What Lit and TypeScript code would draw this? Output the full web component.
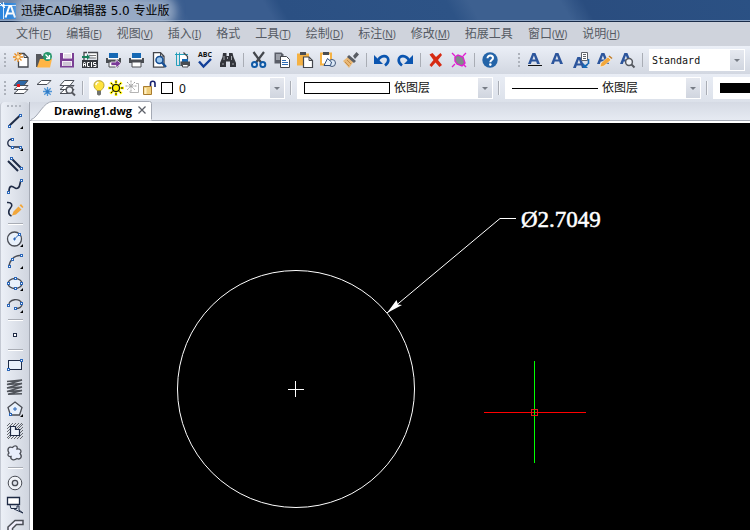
import { LitElement, html, svg, css, nothing, SVGTemplateResult } from "lit";
import { customElement, property } from "lit/decorators.js";

const INK = "#1f2b45";
const GRAY = "#4a4d55";
const BLUE = "#0b55b0";
const ORANGE = "#f2a73b";

/** Small square grip that marks an end point of a drawing primitive. */
const node = (x: number, y: number) =>
  svg`<rect x=${x + 0.5} y=${y + 0.5} width="2" height="2" fill="#fff" stroke="#2a66b8" shape-rendering="crispEdges"/>`;
const corner = svg`<path d="M16 13v3h-3z" fill="#000"/>`;
const printer = svg`<path d="M4 1h9v6H4z" fill="#1668b4"/><path d="M1 6h15v5H1z" fill="#4a4d52"/><path d="M3 6h11v1.5H3z" fill="#fff"/><path d="M4 10h9v5H4z" fill="#fff" stroke="#4a4d52"/>`;
const letterA = svg`<path d="M1 12 5.4 1h3L13 12h-3L9.200 9.600H4.700L3.900 12zM5.400 7.500h3L6.900 3.500z" fill="#2c559c"/>`;
const layers = (top: string) =>
  svg`<g stroke="#4a4e56" fill="#fff"><path d="M5.500 9.500H15L11 13.500H1z"/><path d="M5.500 5.500H15L11 9.500H1z"/><path d="M5.500.500H15L11 5.500H1z" fill=${top}/></g>`;

const ICONS: Record<string, SVGTemplateResult> = {
  new: svg`<path d="M6 1.500h5l4 4v9.500H5.500V9" fill="#fff" stroke="#44474d" stroke-width="1.300"/><path d="M11 1.500v4h4" fill="none" stroke="#44474d"/><path d="M5 0v10M0 5h10M1.500 1.500l7 7M8.500 1.500l-7 7" stroke="#e98b1c" stroke-width="1.300"/><circle cx="5" cy="5" r="1.800" fill="#ffe9b8"/>`,
  open: svg`<path d="M0 2h5l1 2h5v11H0z" fill="#55575c"/><path d="M4 7h12l-2 8.500H1z" fill="#ffb545"/><circle cx="11.500" cy="4.500" r="4.500" fill="#26966a"/><path d="M9.500 2.500l4 4M13.500 3v3.500H10" stroke="#fff" stroke-width="1.300" fill="none"/>`,
  save: svg`<path d="M1 1h14v14.500H1z" fill="#7b4095"/><path d="M4 1h9v5.500H4z" fill="#fff"/><path d="M3 9h10v5H3z" fill="#f2ecf6"/><path d="M4 11h8M4 13h8" stroke="#aaa0b4"/><path d="M5 3h7M5 5h7" stroke="#c9c1d0"/>`,
  acis: svg`<path d="M6 .500h9.500v8M2 8.500V.500h3" fill="#fff" stroke="#44474d" stroke-width="1.300"/><path d="M7 3.500h7M7 6h7" stroke="#777"/><path d="M0 4h5V2l3 3-3 3V6H0z" fill="#17805a"/><path d="M0 8h16v8H0z" fill="#34373c"/><path d="M1.500 14.500v-3l1-1.500 1 1.500v3M1.500 12.500h2M7.500 10.500h-2v4h2M9.500 10v5M14 10.500h-2.500v2H14v2h-2.500" stroke="#fff" fill="none"/>`,
  printTo: svg`${printer}<path d="M6 10h5V7.500l5 4-5 4.500v-2.500H6z" fill="#7a3b98" stroke="#fff" stroke-width=".700"/>`,
  print: printer,
  preview: svg`<path d="M2.500.700h7l3.500 3.500v11H2.500z" fill="#fff" stroke="#44474d" stroke-width="1.300"/><path d="M9.500.700v3.500H13" fill="none" stroke="#44474d"/><circle cx="8.500" cy="8" r="3.500" fill="#9ec8ee" stroke="#174f94" stroke-width="1.600"/><path d="M11 10.500l4 4.500" stroke="#174f94" stroke-width="2.300"/>`,
  plot: svg`<path d="M5 2h6l3 3v4H5z" fill="#fff"/><path d="M2.500.500v13h4M1 2.500h13M5.500.500v13" fill="none" stroke="#25a0bb"/><path d="M9.500.500l4 4v3" fill="none" stroke="#44474d" stroke-width="1.200"/><path d="M8 7h6v3H8z" fill="#1668b4"/><path d="M6.500 9.500H16V14H6.500z" fill="#4a4d52"/><path d="M8.500 12.500H14V15H8.500z" fill="#fff" stroke="#4a4d52"/>`,
  spell: svg`<path d="M2 9.500l4.500 5L14 7" fill="none" stroke="#123f98" stroke-width="2.400"/>`,
  find: svg`<path d="M3 1h3.500v3H9V1h3.500l1 4 2.500 6v4h-6V9.500H6V15H0v-4l2.500-6z" fill="#33353b"/><path d="M4 4v4M11.500 4v4M2 12h2M12 12h2M7.500 5v2" stroke="#a3a6ad"/>`,
  cut: svg`<path d="M2.500 0L10 10.500M13 0L5 10.500" stroke="#44474d" stroke-width="2.200"/><circle cx="3.500" cy="12.500" r="2.500" fill="#dce8f6" stroke="#105aa6" stroke-width="2"/><circle cx="11.800" cy="12.500" r="2.500" fill="#dce8f6" stroke="#105aa6" stroke-width="2"/>`,
  copy: svg`<path d="M.500.500h7l2 2v9H.500z" fill="#5a5e68"/><path d="M2 3h5M2 5h4M2 7h4" stroke="#dfe3ea"/><path d="M6.500 4.500h6l3 3v8h-9z" fill="#fff" stroke="#44474d"/><path d="M8 8.500h4M8 10.500h6M8 12.500h6" stroke="#2e6cb5"/>`,
  paste: svg`<path d="M0 1.500h12v12H0z" fill="#f5b244"/><path d="M3 0h6v3H3z" fill="#4a4d52"/><path d="M6.500 5h5.500l3.500 3.500v7h-9z" fill="#fff" stroke="#44474d" stroke-width="1.200"/><path d="M12 5v3.500h3.500" fill="none" stroke="#44474d"/>`,
  pasteBlock: svg`<path d="M1 1.500h10v11H1z" fill="#fff" stroke="#f5b244" stroke-width="2"/><path d="M3 0h6v3H3z" fill="#4a4d52"/><circle cx="12" cy="11" r="3.500" fill="#dce9f7" stroke="#44597b"/><path d="M4 13.500l3.500-7 4 3.500-1 3.500z" fill="#e9f1fa" stroke="#2e4d7c"/>`,
  brush: svg`<path d="M0 9l6-5 5 5-5 7z" fill="#e8b877"/><path d="M2 10l4 4M4 8l4 4" stroke="#c68c48"/><path d="M6 3l7 6-2 2-7-6zM10 4l3.500-4L16 2.500 12 7z" fill="#595d64"/>`,
  undo: svg`<path d="M0 3v9h9z" fill="${BLUE}"/><path d="M4 8.500C6.500 3 14 2.500 14.300 8c.100 2.500-1.300 4-3.300 5.500" fill="none" stroke="${BLUE}" stroke-width="2.700"/>`,
  redo: svg`<path d="M16 3v9H7z" fill="${BLUE}"/><path d="M12 8.500C9.500 3 2 2.500 1.700 8c-.100 2.500 1.300 4 3.300 5.500" fill="none" stroke="${BLUE}" stroke-width="2.700"/>`,
  remove: svg`<path d="M1.500 2.500l3-1.500L8 5l4.500-4L14 3l-4 5 4 5-2.500 2L7.500 10.500 3.500 15 1.500 13 5.500 8z" fill="#d62a12"/>`,
  purge: svg`<path d="M4 5l3-2 5 2 2 6-3 3-5-2-2-3z" fill="#7f8b8b" stroke="#e01fd0" stroke-width="1.400"/><path d="M1 1l3 3M15 1l-3 3M1 15l3-3M15 15l-3-3" stroke="#e01fd0" stroke-width="1.400"/>`,
  help: svg`<circle cx="8" cy="8" r="7.700" fill="#2464a8"/><path d="M5.500 6.200C5.500 2.500 11 2.800 11 6c0 2-2.700 2-2.700 4.200" fill="none" stroke="#fff" stroke-width="2"/><circle cx="8.300" cy="12.600" r="1.300" fill="#fff"/>`,
  textLine: svg`${letterA}<path d="M1 13.500h14" stroke="#111"/>`,
  text: letterA,
  textAll: svg`<g transform="translate(-1 4)">${letterA}</g><path d="M8.500.500h6v8h-6z" fill="#fff" stroke="#60646c"/><path d="M10 2.500h3M10 4.500h3M10 6.500h3" stroke="#60646c"/><path d="M15.500 7v5M15 12l-4 3" stroke="#1668b4" stroke-width="1.600"/><path d="M10 11v5h5z" fill="#1668b4"/>`,
  textEdit: svg`${letterA}<path d="M4 15l1-4 7-6 3 3-7 6z" fill="${ORANGE}" stroke="#fff" stroke-width=".500"/><path d="M13 4l3 2.500" stroke="#c27b22" stroke-width="1.500"/>`,
  textFind: svg`${letterA}<circle cx="10" cy="10" r="3.400" fill="#eef1f6" stroke="#55585f" stroke-width="1.500"/><path d="M12.500 12.500L15.500 15.500" stroke="#55585f" stroke-width="2"/>`,
  layer: svg`${layers("#2d68a6")}<path d="M4 4h3v3H4z" fill="#e5181c"/>`,
  layerFreeze: svg`<path d="M5.500.500H15L11 4.500H1z" fill="#fff" stroke="#4a4e56"/><path d="M11.500 7v9M7 11.500h9M8.300 8.300l6.400 6.400M14.700 8.300l-6.400 6.400" stroke="#4e94d6" stroke-width="1.300"/><circle cx="11.500" cy="11.500" r="1.600" fill="#2f7ac4"/>`,
  layerFind: svg`${layers("#fff")}<circle cx="10.500" cy="10" r="3.300" fill="#eef1f6" stroke="#55585f" stroke-width="1.500"/><path d="M13 12.500l3 3" stroke="#55585f" stroke-width="2"/>`,
  bulb: svg`<path d="M6 10.500C5 9 3 8 3 5.300 3 2.500 5 .700 8 .700s5 1.800 5 4.600c0 2.700-2 3.700-3 5.200z" fill="#ffe33f" stroke="#b8a22d"/><path d="M5.500 2.500l2 0M5 5l.500-2" stroke="#fff" stroke-width="1.400"/><path d="M6 11h4v3.500L8.500 15.500h-1L6 14.500z" fill="#70736f"/>`,
  sun: svg`<path d="M8 0v16M0 8h16M2.300 2.300l11.400 11.400M13.700 2.300L2.300 13.700" stroke="#fff200" stroke-width="2.500"/><path d="M8 1v2M8 13v2M1 8h2M13 8h2M3 3l1.500 1.500M13 3l-1.500 1.500M3 13l1.500-1.500M13 13l-1.500-1.500" stroke="#111"/><circle cx="8" cy="8" r="3.500" fill="#fff200" stroke="#111" stroke-width="1.200"/>`,
  viewFreeze: svg`<path d="M6 .500v11M.500 6h11M2 2l8 8M10 2l-8 8" stroke="#9c9c9c" stroke-dasharray="2 1"/><path d="M11 3.500h2.500v9H5V11" fill="none" stroke="#b4b4b4"/>`,
  unlock: svg`<path d="M8.500 7V3.500C8.500.500 13 .500 13 3.500V7" fill="none" stroke="#16206c" stroke-width="1.600"/><path d="M1.500 6.500h8v8h-8z" fill="#f0cf7e" stroke="#a97c2e"/><path d="M2.500 8h2v6h-2z" fill="#fff0c5"/>`,
  swatch: svg`<path d="M2.500 2.500h11v11h-11z" fill="#fff" stroke="#000" shape-rendering="crispEdges"/>`,
  line: svg`<path d="M2.500 12.500L13 2.500" stroke="${INK}" stroke-width="2"/>${node(1, 12)}${node(12, 1)}${corner}`,
  polyline: svg`<path d="M6 4C-1 4-1 12 6 12h7" fill="none" stroke="${INK}" stroke-width="1.300"/>${node(4, 3)}${node(4, 11)}${node(12, 11)}${corner}`,
  multiline: svg`<path d="M1 4l10 10M4.500 1.500l9.500 9.500" stroke="${INK}" stroke-width="2"/>${node(3, 0)}${node(13, 10)}`,
  spline: svg`<path d="M2 13C2 3 8 9.500 9 9.500c5.500 0 2.500-6 5.500-8" fill="none" stroke="${INK}" stroke-width="1.700"/>${node(0, 12)}${node(13, 0)}`,
  sketch: svg`<path d="M0 1.500c5-.500 6 3 3.500 5.500-2 2-3 6.500 1 8" fill="none" stroke="${INK}" stroke-width="1.600"/><path d="M5 14.500l1.500-4 5-5 3 3-5.500 5zM12.500 4.500l1.500-1.500 2.500 3L15.500 7z" fill="${ORANGE}"/>`,
  circle: svg`<circle cx="7.500" cy="8" r="7" fill="#e9f1fb" stroke="${GRAY}" stroke-width="1.300"/><path d="M7.500 8l4-4M6 8h3M7.500 6.500v3" stroke="#2a66b8"/>${node(11, 2)}${corner}`,
  arc: svg`<path d="M2 14C2 8 7 2.500 13 2.500" fill="none" stroke="${GRAY}" stroke-width="1.400"/>${node(1, 12)}${node(4, 5)}${node(13, 1)}${corner}`,
  ellipse: svg`<ellipse cx="8" cy="8.500" rx="7" ry="5" fill="#e9f1fb" stroke="${GRAY}" stroke-width="1.300"/>${node(7, 2)}${node(0, 7)}${node(13, 7)}${node(7, 12)}${corner}`,
  ellipseArc: svg`<path d="M2 9c-2-7 12-9 13-2 .300 3-3 4.500-6 4.500" fill="none" stroke="${GRAY}" stroke-width="1.300"/>${node(0, 7)}${node(13, 5)}${node(7, 10)}${corner}`,
  point: svg`<path d="M6.500 6.500h3v3h-3z" fill="#fff" stroke="${INK}" shape-rendering="crispEdges"/>`,
  rect: svg`<path d="M1.500 3.500h13v9h-13z" fill="#e9f1fb" stroke="${INK}" shape-rendering="crispEdges"/>${node(0, 11)}${node(13, 2)}`,
  helix: svg`<path d="M0 2.500L15 1 0 5.500 15 4.500 0 9l15-1-15 4.500 15-1L1 15.300l14-.500" fill="none" stroke="#50545b" stroke-width="1.500"/>`,
  polygon: svg`<path d="M8 1l7 5.500L12.500 14h-9L1 6.500z" fill="#e9f1fb" stroke="${GRAY}" stroke-width="1.300"/><path d="M6 8h4M8 6v4" stroke="#2a66b8"/>${node(2, 12)}${corner}`,
  hatch: svg`<path d="M0 3l3-3M0 6l6-6M0 9l9-9M0 12L12 0M0 15L15 0M1 16L16 1M4 16L16 4M7 16l9-9M10 16l6-6M13 16l3-3" stroke="#44474d" stroke-width=".800"/><path d="M3.500 3.500h5v3h4v6h-9z" fill="#edf3fb" stroke="${INK}" stroke-width="1.200"/>`,
  cloud: svg`<path d="M2 8C-.500 4 2 1 5.500 2.500 8-.500 11 1 10 4c4-.500 5 2.500 3 4.500C16 12 13 15 10 13.500 7 16 3 14.500 4 11.500 1 12 0 9.500 2 8z" fill="#e9eefb" stroke="${GRAY}" stroke-width="1.300"/>`,
  donut: svg`<circle cx="8" cy="8" r="6.800" fill="#f0f3f8" stroke="${GRAY}"/><circle cx="8" cy="8" r="2.700" fill="#dce0e8" stroke="${GRAY}" stroke-width="1.300"/>`,
  wipeout: svg`<path d="M.500.500h12v7H.500z" fill="#fff" stroke="${INK}" stroke-width="1.300"/><path d="M3 8l1 3.500h6V9h2v4l4 3-9-4" fill="#e9f1fb" stroke="${INK}"/>`,
  chamfer: svg`<path d="M1 16V8l7-6.500h8v4H9.500l-4 4V16z" fill="#f1effc" stroke="${GRAY}" stroke-width="1.500"/>`,
};

@customElement("cad-icon")
class CadIcon extends LitElement {
  @property() name = "";
  static styles = css`
    :host { display: block; width: 16px; height: 16px; flex: none; }
    .glyph { display: block; overflow: visible; }
    .abc { font: bold 7px "Open Sans", "Noto Sans", sans-serif; fill: #111; }
  `;
  render() {
    return html`<svg class="glyph" width="16" height="16" viewBox="0 0 16 16" aria-hidden="true">
      ${ICONS[this.name] ?? nothing}
      ${this.name === "spell" ? svg`<text class="abc" x="8" y="5" text-anchor="middle">ABC</text>` : nothing}
    </svg>`;
  }
}

/** Row or column of tool buttons; "|" stands for a separator. */
@customElement("tool-strip")
class ToolStrip extends LitElement {
  @property({ type: Array }) tools: [string, string][] = [];
  @property({ type: Boolean, reflect: true }) vertical = false;
  static styles = css`
    :host { display: flex; align-items: center; gap: 7px; flex: none; }
    :host([vertical]) { flex-direction: column; gap: 6px; }
    .tool { display: block; padding: 0; border: 0; background: none; width: 16px; height: 16px; }
    .tool:hover { background: #fff8; }
    .sep { width: 1px; height: 14px; background: #a9adb5; }
    :host([vertical]) .sep { width: 15px; height: 1px; border-bottom: 1px solid #fff; }
  `;
  render() {
    return this.tools.map(([icon, label]) =>
      icon === "|"
        ? html`<span class="sep"></span>`
        : html`<button class="tool" title=${label} aria-label=${label}><cad-icon name=${icon}></cad-icon></button>`
    );
  }
}

@customElement("cad-select")
class CadSelect extends LitElement {
  @property() label = "";
  @property() value = "";
  @property({ reflect: true }) kind = "text";
  static styles = css`
    :host { display: block; position: relative; flex: none; width: 196px; height: 22px; }
    :host([kind="text"]) { width: 96px; }
    .box {
      appearance: none; display: block; width: 100%; height: 22px; margin: 0; border: 0; border-radius: 0;
      background: #fff; color: #111; padding: 0 18px 0 97px;
      font: 12px "Liberation Sans", "Noto Sans CJK SC", sans-serif;
    }
    .box.text { padding-left: 3px; font: 10px "DejaVu Sans Mono", monospace; }
    .box.layer { padding-left: 90px; font-family: "Noto Sans", sans-serif; }
    .preview { position: absolute; left: 7px; top: 0; height: 22px; display: flex; align-items: center; pointer-events: none; }
    .preview.icons { left: 2px; gap: 1px; }
    .sample { box-sizing: border-box; width: 86px; background: #000; }
    .sample.color { height: 12px; border: 1px solid #000; background: #fff; }
    .sample.stroke { height: 1px; }
    .sample.weight { height: 10px; }
    .arrow {
      position: absolute; right: 1px; top: 1px; width: 14px; height: 20px; pointer-events: none;
      display: flex; align-items: center; justify-content: center;
      background: linear-gradient(#e6e9f0, #d0d5df);
    }
    .arrow::before { content: ""; border: 3px solid transparent; border-top-color: #777c85; border-bottom: 0; }
  `;
  renderPreview() {
    if (this.kind === "text") return nothing;
    if (this.kind === "layer") {
      const icons = ["bulb", "sun", "viewFreeze", "unlock", "swatch"];
      return html`<span class="preview icons">${icons.map((n) => html`<cad-icon name=${n}></cad-icon>`)}</span>`;
    }
    return html`<span class="preview"><span class="sample ${this.kind}"></span></span>`;
  }
  render() {
    return html`<select class="box ${this.kind}" aria-label=${this.label}><option>${this.value}</option></select>
      ${this.renderPreview()}
      <span class="arrow"></span>`;
  }
}

const MENUS: [string, string][] = [
  ["文件", "F"], ["编辑", "E"], ["视图", "V"], ["插入", "I"], ["格式", ""], ["工具", "T"],
  ["绘制", "D"], ["标注", "N"], ["修改", "M"], ["拓展工具", ""], ["窗口", "W"], ["说明", "H"],
];
const SEP: [string, string] = ["|", ""];
const MAIN: [string, string][] = [
  ["new", "新建"], ["open", "打开"], ["save", "保存"], ["acis", "输入ACIS"], ["printTo", "发布"], ["print", "打印"],
  ["preview", "打印预览"], ["plot", "页面设置"], ["spell", "拼写检查"], ["find", "查找"], SEP,
  ["cut", "剪切"], ["copy", "复制"], ["paste", "粘贴"], ["pasteBlock", "粘贴为块"], ["brush", "特性匹配"], SEP,
  ["undo", "撤销"], ["redo", "重做"], SEP, ["remove", "删除"], ["purge", "清理"], SEP, ["help", "帮助"],
];
const TEXT: [string, string][] = [
  ["textLine", "单行文字"], ["text", "多行文字"], ["textAll", "文字样式"], ["textEdit", "编辑文字"], ["textFind", "查找文字"], SEP,
];
const LAYER: [string, string][] = [["layer", "图层"], ["layerFreeze", "冻结图层"], ["layerFind", "图层浏览"]];
const DRAW: [string, string][] = [
  ["line", "直线"], ["polyline", "多段线"], ["multiline", "多线"], ["spline", "样条曲线"], ["sketch", "草图"], SEP,
  ["circle", "圆"], ["arc", "圆弧"], ["ellipse", "椭圆"], ["ellipseArc", "椭圆弧"], SEP, ["point", "点"], SEP,
  ["rect", "矩形"], ["helix", "螺旋"], ["polygon", "多边形"], ["hatch", "图案填充"], ["cloud", "修订云线"], SEP,
  ["donut", "圆环"], ["wipeout", "区域覆盖"], ["chamfer", "倒角"],
];

@customElement("app-root")
class AppRoot extends LitElement {
  static styles = css`
    :host {
      display: flex; flex-direction: column; height: 100vh; overflow: hidden;
      background: #dfe4ed; color: #111; font: 12px "Noto Sans", "Noto Sans CJK SC", sans-serif;
    }
    .title {
      flex: none; box-sizing: border-box; height: 22px; display: flex; align-items: center; gap: 5px;
      border-bottom: 1px solid #1a2c49; box-shadow: inset 0 -1px #8ba3c4;
      background: linear-gradient(60deg, #7389a9 0%, #6580a8 18%, #3a5d8f 25%, #3a5d8f 36%, #2b5083 38%, #2d5386 60%, #3d6090 63%, #3d6090 75%, #2a4d7f 78%, #2b5184 100%);
    }
    .logo { flex: none; align-self: flex-end; margin-bottom: 2px; }
    .caption {
      margin: 0; font: 400 12px/18px "DejaVu Sans", "Noto Sans CJK SC", sans-serif; color: #000; white-space: nowrap;
      background: #b9c6d899; box-shadow: 0 0 8px 6px #b9c6d899; border-radius: 8px;
    }
    .menu { flex: none; height: 24px; display: flex; align-items: center; gap: 15px; padding: 0 16px; box-sizing: border-box; background: #cfd3dc; }
    .item { padding: 0; border: 0; background: none; color: #555a63; font: inherit; line-height: 20px; white-space: nowrap; }
    .key { font-size: 10px; }
    .bar {
      flex: none; display: flex; align-items: center; height: 28px; padding-left: 4px; overflow: hidden;
      background: linear-gradient(#ebeff7, #d2d7e1);
    }
    .bar.props { gap: 5px; background: linear-gradient(#e9edf5, #dce1ea); }
    .grip { flex: none; width: 2px; height: 14px; margin-right: 7px; background: repeating-linear-gradient(#adb2bb 0 2px, transparent 2px 4px); }
    .grip.second { margin: 0 7px 0 20px; }
    .bar.props .grip, .bar.props .layers { margin-right: 2px; }
    .style { margin-left: 6px; }
    .rule { flex: none; width: 1px; height: 14px; background: #a9adb5; border-right: 1px solid #f4f6fa; }
    .body { flex: 1; min-height: 0; display: flex; }
    .side {
      flex: none; box-sizing: border-box; width: 29px; padding: 3px 5px 0 6px; overflow: hidden;
      border-left: 1px solid #c4c9d3; border-radius: 4px 4px 0 0; background: linear-gradient(90deg, #ecf0f7, #d0d5df);
    }
    .side .tools { margin-top: 6px; width: 16px; }
    .dots { height: 2px; width: 14px; background: repeating-linear-gradient(90deg, #b2b7c0 0 2px, transparent 2px 4px); }
    .work { flex: 1; min-width: 0; display: flex; flex-direction: column; border-left: 1px solid #a4a9b4; }
    .tabs { flex: none; height: 18px; display: flex; background: linear-gradient(#d5dae4, #e6eaf2); border-bottom: 1px solid #a4a9b4; }
    .tab { position: relative; flex: none; display: flex; align-items: center; width: 122px; height: 18px; box-sizing: border-box; padding: 0 5px 0 24px; }
    .shape { position: absolute; left: 1px; top: -2px; }
    .name { position: relative; padding: 0; border: 0; background: none; color: #000; font: bold 11px/16px "Open Sans", "Noto Sans", sans-serif; }
    .close { position: relative; margin-left: auto; padding: 0; border: 0; background: none; width: 10px; height: 16px; }
    .x { display: block; }
    .frame { flex: 1; min-height: 0; border: solid #fff; border-width: 2px 0 0 3px; background: #000; }
    .drawing { display: block; width: 100%; height: 100%; }
    .dim { font: 23px "Liberation Serif", serif; fill: #fff; stroke: #fff; stroke-width: 0.5px; }
  `;

  render() {
    return html`
      <header class="title">
        <svg class="logo" width="16" height="17" viewBox="0 0 16 17" aria-hidden="true">
          <path d="M0 1h16v16H0z" fill="#2b84dc" />
          <path d="M0 3.500h16M3.500 0v17" stroke="#d5e8fb" />
          <path d="M0 1l5 5" stroke="#fff" />
          <path d="M5.500 15.500L9.500 4h1.500l4 11.500M7 11.500h6.500" fill="none" stroke="#fff" stroke-width="2" />
          <circle cx="3.500" cy="3.500" r="1.500" fill="#fff" />
        </svg>
        <h1 class="caption">迅捷CAD编辑器 5.0 专业版</h1>
      </header>
      <nav class="menu">
        ${MENUS.map(([text, key]) => html`<button class="item">${text}${key ? html`<span class="key">(<u>${key}</u>)</span>` : nothing}</button>`)}
      </nav>
      <div class="bar">
        <span class="grip"></span>
        <tool-strip .tools=${MAIN}></tool-strip>
        <span class="grip second"></span>
        <tool-strip .tools=${TEXT}></tool-strip>
        <cad-select class="style" kind="text" label="文字样式" value="Standard"></cad-select>
      </div>
      <div class="bar props">
        <span class="grip"></span>
        <tool-strip class="layers" .tools=${LAYER}></tool-strip>
        <span class="rule"></span>
        <cad-select kind="layer" label="图层" value="0"></cad-select>
        <span class="rule"></span>
        <cad-select kind="color" label="颜色" value="依图层"></cad-select>
        <span class="rule"></span>
        <cad-select kind="stroke" label="线型" value="依图层"></cad-select>
        <span class="rule"></span>
        <cad-select kind="weight" label="线宽" value="依图层"></cad-select>
      </div>
      <div class="body">
        <aside class="side">
          <div class="dots"></div>
          <tool-strip class="tools" vertical .tools=${DRAW}></tool-strip>
        </aside>
        <main class="work">
          <div class="tabs">
            <div class="tab">
              <svg class="shape" width="122" height="21" viewBox="0 0 122 21" aria-hidden="true">
                <path d="M0 20.500C7 18 12 1.500 22 1.500H118.500Q120.500 1.500 120.500 3.500V20.500z" fill="#fff" />
                <path d="M0 19.500C7 18 12 1.500 22 1.500H118.500Q120.500 1.500 120.500 3.500V19.500" fill="none" stroke="#a4a9b4" />
              </svg>
              <button class="name">Drawing1.dwg</button>
              <button class="close" aria-label="关闭">
                <svg class="x" width="10" height="16" viewBox="0 0 10 16"><path d="M1.500 3.500l7 7M8.500 3.500l-7 7" stroke="#5c6068" stroke-width="1.300" /></svg>
              </button>
            </div>
          </div>
          <div class="frame">
            <svg class="drawing" role="img" aria-label="Drawing1.dwg">
              <g fill="none" stroke="#fff">
                <circle cx="263" cy="266" r="118.500" />
                <path d="M354 190L467 95.500H483" />
                <path d="M254.500 266.500h16M262.500 258v16" shape-rendering="crispEdges" />
              </g>
              <path d="M354 190l9.500-13 1.500 4.500 4 .500z" fill="#fff" />
              <text class="dim" x="488" y="104">Ø2.7049</text>
              <g fill="none" shape-rendering="crispEdges">
                <path d="M451 289.500h102" stroke="#f00" />
                <path d="M501.500 238v102" stroke="#0f0" />
                <path d="M498.500 286.500h6v6h-6z" stroke="#e01818" />
              </g>
            </svg>
          </div>
        </main>
      </div>
    `;
  }
}
